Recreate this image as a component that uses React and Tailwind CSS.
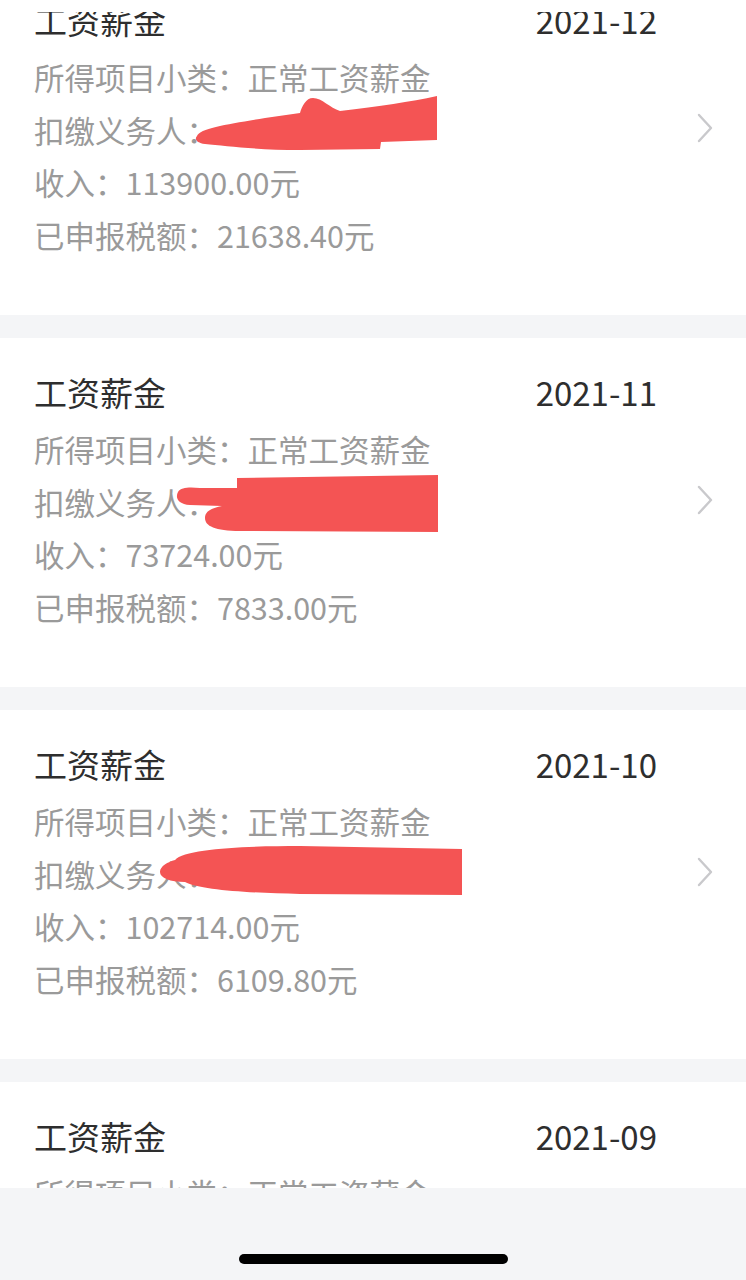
import React from "react";

const cards = [
  {
    date: "2021-12",
    income: "113900.00元",
    tax: "21638.40元",
    scribble:
      "M 197 170 C 200 162, 230 158, 265 152 L 300 147 C 302 140, 306 132, 313 132 C 322 132, 330 142, 340 145 C 380 140, 410 136, 437 130 L 437 174 L 381 176 L 380 183 L 300 184 C 260 184, 225 180, 205 178 C 197 177, 194 173, 197 170 Z",
  },
  {
    date: "2021-11",
    income: "73724.00元",
    tax: "7833.00元",
    scribble:
      "M 237 140 L 438 137 L 438 194 L 240 193 C 215 193, 205 188, 205 180 C 205 173, 212 170, 222 168 L 190 167 C 178 166, 175 160, 178 154 C 181 149, 190 149, 200 150 L 237 150 Z",
  },
  {
    date: "2021-10",
    income: "102714.00元",
    tax: "6109.80元",
    scribble:
      "M 175 150 C 185 138, 250 136, 300 136 L 462 139 L 462 185 L 300 184 C 250 183, 200 180, 185 172 C 170 172, 160 168, 160 162 C 160 156, 168 152, 175 150 Z",
  },
  {
    date: "2021-09",
    income: "",
    tax: "",
    scribble: null,
  },
];

function Chevron() {
  return (
    <svg width="18" height="32" viewBox="0 0 18 32" className="mb-[10px] shrink-0">
      <path d="M3 3 L15 16 L3 29" fill="none" stroke="#c9c9cc" strokeWidth="2.4" strokeLinecap="round" strokeLinejoin="round" />
    </svg>
  );
}

function Card({ c }) {
  return (
    <div className="relative flex h-[349px] shrink-0 items-center bg-white pl-[34px] pr-[32px] pt-[35px] pb-[50px]">
      <div className="flex-1 self-start pr-[39px]">
        <div className="flex h-[40px] items-center justify-between text-[33px] text-[#2e2e2e]">
          <span>工资薪金</span>
          <span>{c.date}</span>
        </div>
        <div className="mt-[10px] text-[30.5px] leading-[52.5px] text-[#9a9a9a]">
          <div>所得项目小类：正常工资薪金</div>
          <div>扣缴义务人：</div>
          <div>收入：{c.income}</div>
          <div>已申报税额：{c.tax}</div>
        </div>
      </div>
      <Chevron />
      {c.scribble && (
        <svg className="pointer-events-none absolute left-0 top-0" width="746" height="349" viewBox="0 0 746 349">
          <path d={c.scribble} fill="#f45454" />
        </svg>
      )}
    </div>
  );
}

export default function App() {
  return (
    <div
      className="flex h-[1280px] w-full flex-col overflow-hidden bg-[#f4f5f7]"
      style={{ fontFamily: '"Noto Sans CJK SC", "Noto Sans", sans-serif' }}
    >
      <div className="relative z-10 h-[12px] shrink-0 bg-white" />
      <div className="flex-1 overflow-hidden">
        <div className="-mt-[46px] flex flex-col gap-[23px]">
          {cards.map((c) => (
            <Card key={c.date} c={c} />
          ))}
        </div>
      </div>
      <div className="flex h-[92px] shrink-0 items-end justify-center bg-[#f4f5f7] pb-[16px]">
        <div className="h-[10px] w-[269px] rounded-full bg-black" />
      </div>
    </div>
  );
}
